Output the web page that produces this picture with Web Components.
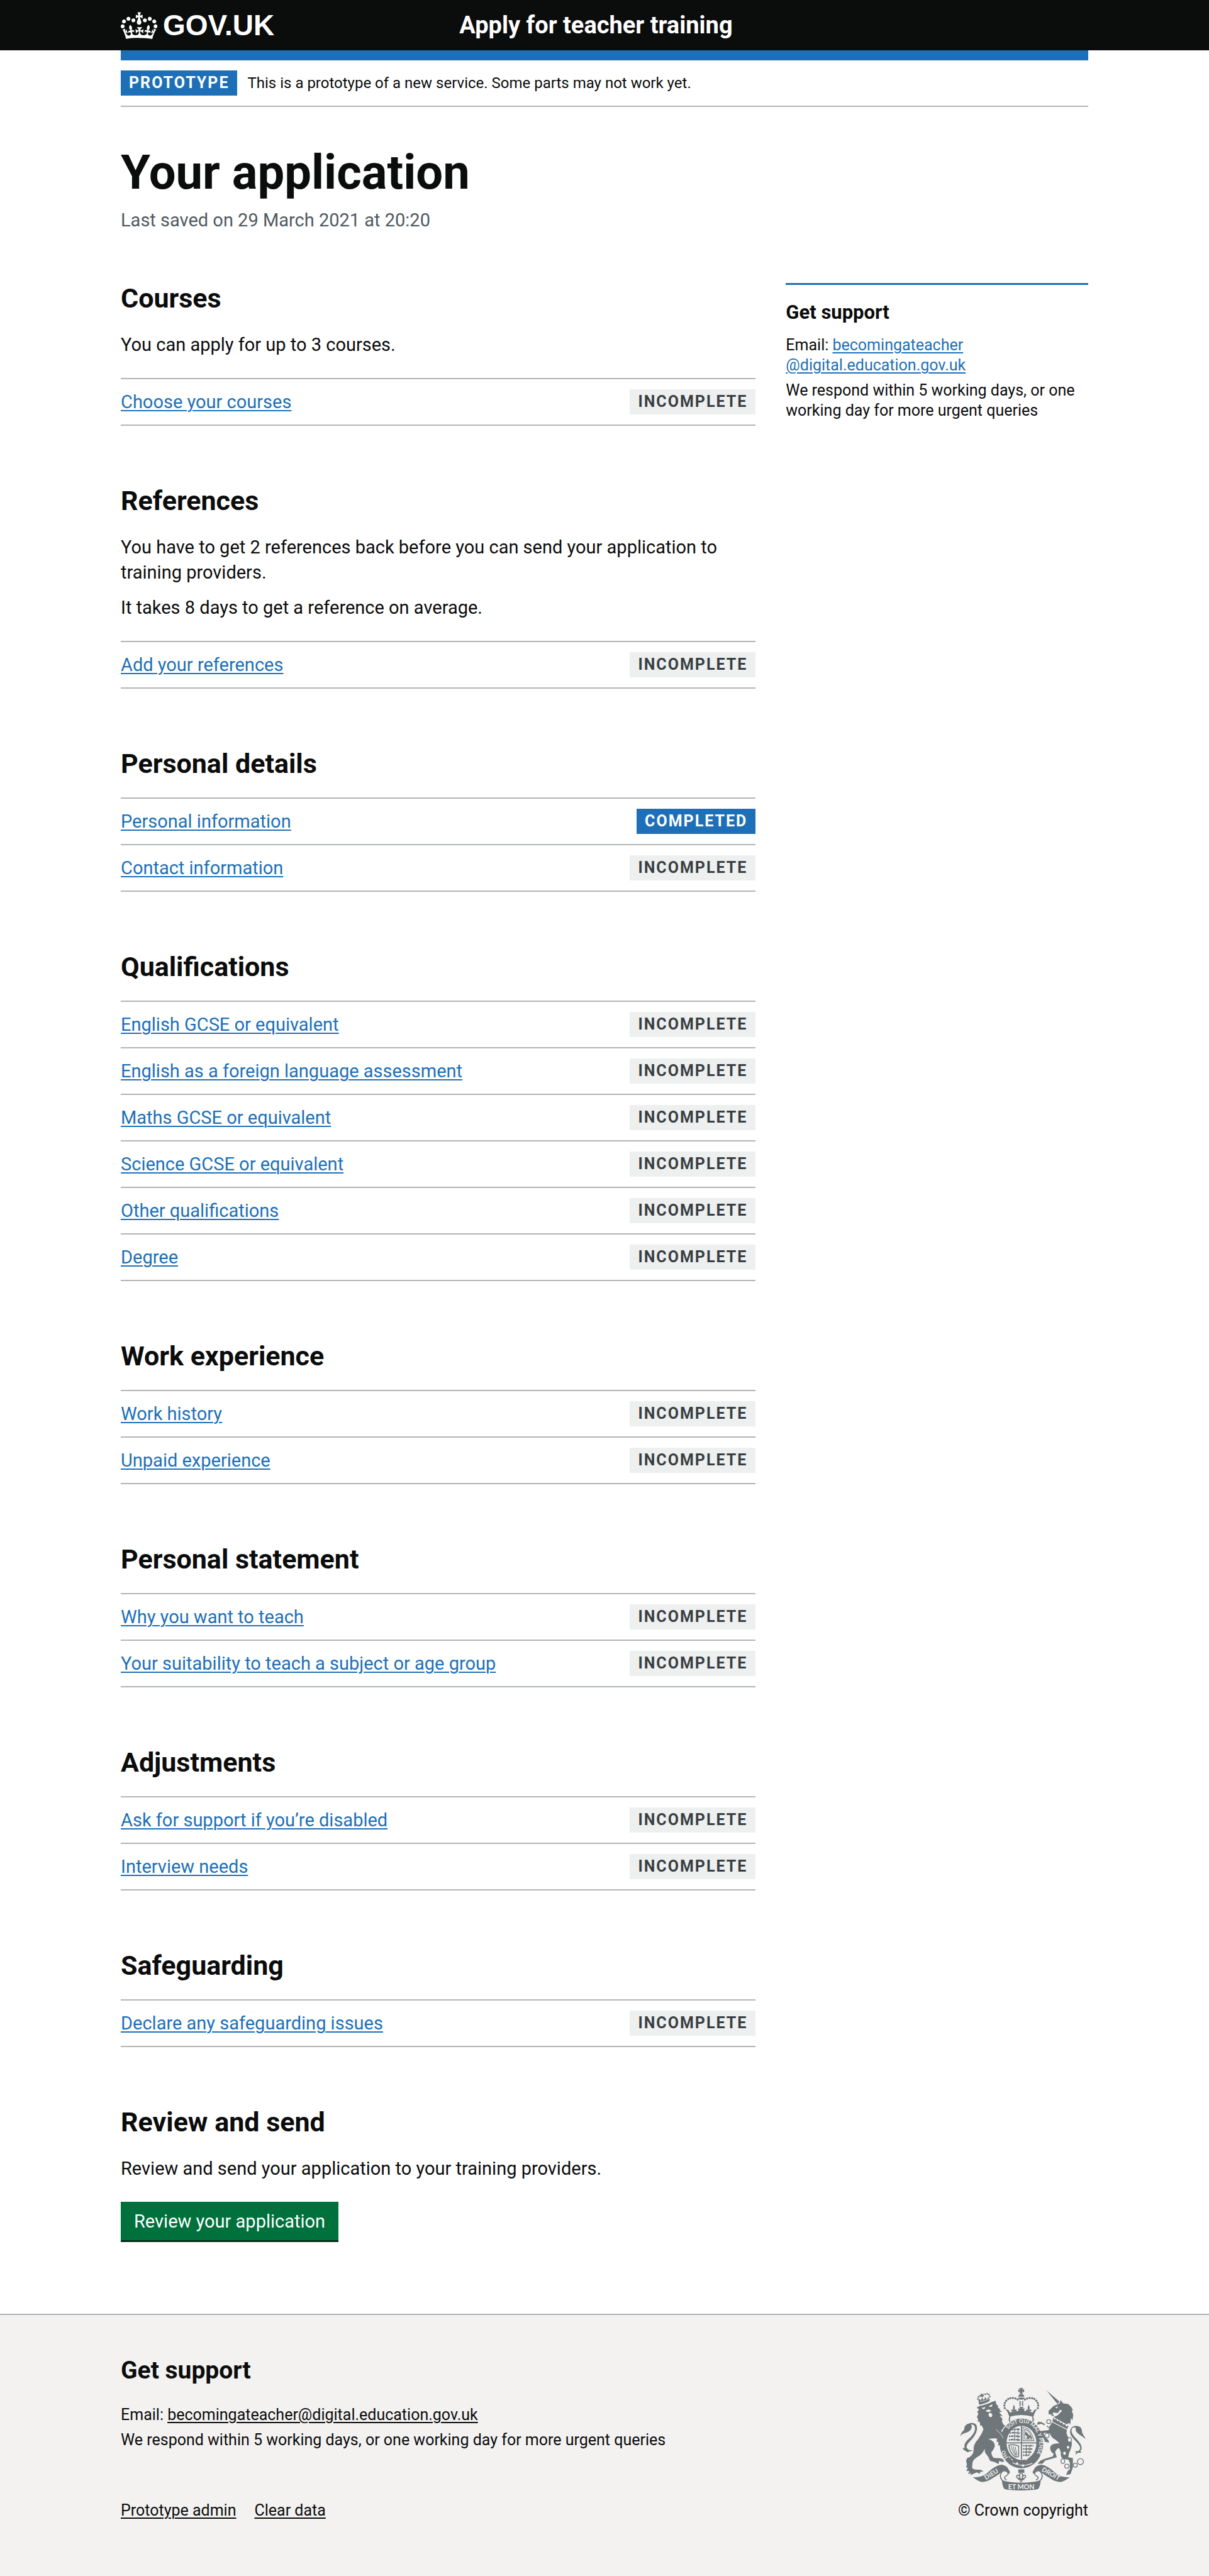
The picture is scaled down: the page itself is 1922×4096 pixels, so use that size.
<!DOCTYPE html>
<html lang="en">
<head>
<meta charset="utf-8">
<meta name="viewport" content="width=device-width, initial-scale=1">
<title>Your application – Apply for teacher training – GOV.UK</title>
<style>
  :root {
    --ink: #0b0c0c;
    --secondary: #505a5f;
    --blue: #1d70b8;
    --rule: #b1b4b6;
    --page: 1538px;
    --gutter: 48px;
  }
  body {
    margin: 0;
    background: #fff;
    color: var(--ink);
    font: 400 29px/40px Roboto, "Liberation Sans", sans-serif;
    -webkit-font-smoothing: antialiased;
  }
</style>
</head>
<body>

<gov-header service="Apply for teacher training"></gov-header>
<phase-banner phase="Prototype">This is a prototype of a new service. Some parts may not work yet.</phase-banner>

<application-page heading="Your application" caption="Last saved on 29 March 2021 at 20:20">
  <task-section heading="Courses">
    <text-block>You can apply for up to 3 courses.</text-block>
    <task-item slot="tasks">Choose your courses</task-item>
  </task-section>
  <task-section heading="References">
    <text-block>You have to get 2 references back before you can send your application to training providers.</text-block>
    <text-block>It takes 8 days to get a reference on average.</text-block>
    <task-item slot="tasks">Add your references</task-item>
  </task-section>
  <task-section heading="Personal details">
    <task-item slot="tasks" completed>Personal information</task-item>
    <task-item slot="tasks">Contact information</task-item>
  </task-section>
  <task-section heading="Qualifications">
    <task-item slot="tasks">English GCSE or equivalent</task-item>
    <task-item slot="tasks">English as a foreign language assessment</task-item>
    <task-item slot="tasks">Maths GCSE or equivalent</task-item>
    <task-item slot="tasks">Science GCSE or equivalent</task-item>
    <task-item slot="tasks">Other qualifications</task-item>
    <task-item slot="tasks">Degree</task-item>
  </task-section>
  <task-section heading="Work experience">
    <task-item slot="tasks">Work history</task-item>
    <task-item slot="tasks">Unpaid experience</task-item>
  </task-section>
  <task-section heading="Personal statement">
    <task-item slot="tasks">Why you want to teach</task-item>
    <task-item slot="tasks">Your suitability to teach a subject or age group</task-item>
  </task-section>
  <task-section heading="Adjustments">
    <task-item slot="tasks">Ask for support if you’re disabled</task-item>
    <task-item slot="tasks">Interview needs</task-item>
  </task-section>
  <task-section heading="Safeguarding">
    <task-item slot="tasks">Declare any safeguarding issues</task-item>
  </task-section>
  <task-section heading="Review and send">
    <text-block>Review and send your application to your training providers.</text-block>
    <action-button slot="action">Review your application</action-button>
  </task-section>
  <support-panel slot="aside"></support-panel>
</application-page>

<gov-footer></gov-footer>

<script>
  const define = (name, render) => customElements.define(name, class extends HTMLElement {
    connectedCallback() {
      if (this.shadowRoot) return;
      this.attachShadow({ mode: 'open' }).innerHTML = render(this);
    }
  });

  const container = `
    .container { box-sizing: border-box; width: min(var(--page), calc(100% - 2 * var(--gutter))); margin: 0 auto; }`;

  define('crown-mark', () => `
    <style>
      :host { display: block; }
      svg { display: block; width: 58px; height: 43px; fill: currentColor; }
    </style>
    <svg viewBox="0 3.8 35.4 26.2" aria-hidden="true">
      <path d="M6.7 12.2c1 .4 2.1-.1 2.5-1s-.1-2.1-1-2.5c-1-.4-2.1.1-2.5 1-.4 1 0 2.1 1 2.5m-4.3 2.5c1 .4 2.1-.1 2.5-1s-.1-2.1-1-2.5c-1-.4-2.1.1-2.5 1-.5 1 0 2.1 1 2.5m-1.3 4.8c1 .4 2.1-.1 2.5-1 .4-1-.1-2.1-1-2.5-1-.4-2.1.1-2.5 1-.4 1 0 2.1 1 2.5m10.4-5.8c1 .4 2.1-.1 2.5-1s-.1-2.1-1-2.5c-1-.4-2.1.1-2.5 1s0 2.1 1 2.5m17.4-1.5c-1 .4-2.1-.1-2.5-1s.1-2.1 1-2.5c1-.4 2.1.1 2.5 1 .5 1 0 2.1-1 2.5m4.3 2.5c-1 .4-2.1-.1-2.5-1s.1-2.1 1-2.5c1-.4 2.1.1 2.5 1 .5 1 0 2.1-1 2.5m1.3 4.8c-1 .4-2.1-.1-2.5-1-.4-1 .1-2.1 1-2.5 1-.4 2.1.1 2.5 1 .4 1 0 2.1-1 2.5m-10.4-5.8c-1 .4-2.1-.1-2.5-1s.1-2.1 1-2.5c1-.4 2.1.1 2.5 1s0 2.1-1 2.5m-5.3-4.9 2.4 1.3V6.5l-2.4.8c-.1-.1-.1-.2-.2-.2s1-3 1-3h-3.4l1 3c-.1.1-.2.1-.2.2-.1.1-2.4-.7-2.4-.7v3.5L17 8.8c-.1.1 0 .2.1.3l-1.4 4.2c-.1.2-.1.4-.1.7 0 1.1.8 2.1 1.9 2.2h.6C19.2 16 20 15.1 20 14c0-.2 0-.4-.1-.7l-1.4-4.2c.2-.1.3-.2.3-.3m-1 20.3c4.6 0 8.9.3 12.8.9 1.1-4.6 2.4-7.2 3.8-9.1l-2.6-.9c.3 1.3.3 1.9 0 2.8-.4-.4-.8-1.2-1.1-2.4l-1.2 4.2c.8-.5 1.4-.9 2-.9-1.2 2.6-2.7 3.2-3.6 3-1.2-.2-1.7-1.3-1.5-2.2.3-1.3 1.6-1.6 2.2-.1 1.2-2.4-.8-3.1-2.1-2.4 1.9-1.9 2.2-3.6.6-5.7-2.2 1.7-2.2 3.3-1.2 5.6-1.3-1.5-3.3-.7-2.5 1.7.9-1.4 2.1-.5 2 .8-.2 1.2-1.7 2.1-3.7 2-2.8-.2-3-2.2-3-3.7.7-.1 1.9.5 3 2l.4-4.4c-1.1 1.2-2.2 1.4-3.3 1.4.4-1.2 2.1-3.1 2.1-3.1h-5.4s1.7 1.9 2.1 3.1c-1.1 0-2.2-.3-3.3-1.4l.4 4.4c1.1-1.5 2.3-2.1 3-2-.1 1.6-.2 3.5-3 3.7-1.9.2-3.5-.8-3.7-2-.2-1.3 1-2.2 1.9-.8.7-2.4-1.3-3.1-2.6-1.7 1-2.3 1-4-1.2-5.6-1.6 2.1-1.3 3.8.6 5.7-1.3-.7-3.2 0-2.1 2.4.6-1.5 1.9-1.1 2.2.1.2.9-.4 1.9-1.5 2.2-1 .2-2.4-.5-3.6-3 .6 0 1.2.3 2 .9l-1.2-4.2c-.3 1.1-.7 1.9-1.1 2.4-.3-.8-.2-1.4 0-2.8l-2.6.9C2.7 22.6 4 25.2 5.1 29.8c3.8-.5 8.2-.8 12.7-.8"/>
    </svg>`);

  define('gov-header', el => `
    <style>
      ${container}
      :host { display: block; }
      header { background: var(--ink); color: #fff; }
      .bar { display: grid; grid-template-columns: 35% 1fr; align-items: center; height: 80px; }
      a { color: inherit; text-decoration: none; font-weight: 700; }
      .logo { display: flex; align-items: center; gap: 9px; width: max-content; font: 700 46px/46px "Liberation Sans", sans-serif; }
      .service { font-size: 38px; line-height: 48px; width: max-content; }
      .stripe { height: 16px; background: var(--blue); }
    </style>
    <header>
      <div class="container bar">
        <a class="logo" href="#"><crown-mark></crown-mark><span>GOV.UK</span></a>
        <a class="service" href="#">${el.getAttribute('service')}</a>
      </div>
    </header>
    <div class="container stripe"></div>`);

  define('status-tag', () => `
    <style>
      :host {
        display: block; padding: 0 13px; background: #eeefef; color: #383f43;
        font-weight: 700; font-size: 25px; line-height: 40px; letter-spacing: 2px;
        text-transform: uppercase; white-space: nowrap;
      }
      :host([solid]) { background: var(--blue); color: #fff; }
    </style><slot></slot>`);

  define('phase-banner', el => `
    <style>
      ${container}
      :host { display: block; }
      .row { display: flex; align-items: center; gap: 16px; padding: 16px 0; border-bottom: 2px solid var(--rule); font-size: 24px; }
    </style>
    <div class="container row"><status-tag solid>${el.getAttribute('phase')}</status-tag><span><slot></slot></span></div>`);

  define('application-page', el => `
    <style>
      ${container}
      :host { display: block; }
      h1 { margin: 64px 0 16px; font-size: 76px; line-height: 80px; font-weight: 700; }
      .caption { margin: 0; color: var(--secondary); }
      .columns { display: flex; align-items: flex-start; gap: var(--gutter); padding: 80px 0 114px; }
      .main { flex: none; width: calc((100% + var(--gutter)) * 2 / 3 - var(--gutter)); display: flex; flex-direction: column; gap: 95px; }
      .aside { flex: 1; }
    </style>
    <main class="container">
      <h1>${el.getAttribute('heading')}</h1>
      <p class="caption">${el.getAttribute('caption')}</p>
      <div class="columns">
        <div class="main"><slot></slot></div>
        <div class="aside"><slot name="aside"></slot></div>
      </div>
    </main>`);

  define('text-block', () => `
    <style>
      :host { display: block; margin-bottom: 16px; }
      p { margin: 0; }
    </style><p><slot></slot></p>`);

  define('task-section', el => `
    <style>
      :host { display: block; }
      h2 { margin: 0 0 30px; font-size: 43px; line-height: 48px; font-weight: 700; }
      ::slotted(text-block:last-of-type) { margin-bottom: 33px; }
      .tasks { border-top: 2px solid var(--rule); }
    </style>
    <section>
      <h2>${el.getAttribute('heading')}</h2>
      <slot></slot>
      ${el.querySelector('task-item') ? '<div class="tasks" role="list"><slot name="tasks"></slot></div>' : ''}
      <slot name="action"></slot>
    </section>`);

  define('task-item', el => `
    <style>
      :host { display: block; }
      div { display: flex; justify-content: space-between; align-items: center; gap: 16px; padding: 16px 0; border-bottom: 2px solid var(--rule); }
      a { color: var(--blue); text-decoration-thickness: 2px; text-underline-offset: 3px; }
    </style>
    <div role="listitem">
      <a href="#"><slot></slot></a>
      ${el.hasAttribute('completed') ? '<status-tag solid>Completed</status-tag>' : '<status-tag>Incomplete</status-tag>'}
    </div>`);

  define('action-button', () => `
    <style>
      :host { display: block; }
      button { display: block; margin: 0; border: 0; border-bottom: 3px solid #002d18; border-radius: 0; padding: 11px 21px 10px; background: #00703c; color: #fff; font: inherit; cursor: pointer; }
    </style><button type="button"><slot></slot></button>`);

  define('support-panel', () => `
    <style>
      :host { display: block; }
      aside { border-top: 3px solid var(--blue); padding-top: 24px; font-size: 25px; line-height: 32px; }
      h2 { margin: 0 0 16px; font-size: 31px; line-height: 40px; font-weight: 700; }
      p { margin: 0 0 8px; }
      a { color: var(--blue); text-decoration-thickness: 2px; text-underline-offset: 3px; }
    </style>
    <aside>
      <h2>Get support</h2>
      <p>Email: <a href="#">becomingateacher<wbr>@digital.education.gov.uk</a></p>
      <p>We respond within 5 working days, or one working day for more urgent queries</p>
    </aside>`);

  const dots = (points, r) => points.map(([x, y]) => `<circle cx="${x}" cy="${y}" r="${r}"/>`).join('');
  // Beads along each arch of the large crown, mirrored about its centre
  const arch = [[399,246],[397,230],[400,215],[408,202],[420,192],[433,187],[448,186],[463,189],[476,195]]
    .flatMap(([x, y]) => [[x, y], [996 - x, y]]);
  // One fleur-de-lis of the crown rim
  const fleur = x => `<path d="M${x} 226q10 18 3 34 8-10 14-2l-6 10h-22l-6-10q6-8 14 2-7-16 3-34z"/>`;

  define('royal-crest', () => `
    <style>
      :host { display: block; }
      svg { display: block; width: 200px; height: 163px; }
      .f { fill: #6f777b; }
      .s { fill: none; stroke: #6f777b; }
      .bg { fill: #f3f2f1; }
      .bs { fill: none; stroke: #f3f2f1; }
      .none { fill: none; }
      text { fill: #f3f2f1; font: 700 38px Lato, sans-serif; text-anchor: middle; }
    </style>
    <svg viewBox="132 126 750 612" role="img" aria-label="Royal coat of arms">
      <!-- large crown -->
      <g class="f">
        <path d="M486 126h23l-6 12 12-5v18l-12-4 6 12h-23l6-12-12 4v-18l12 5z"/>
        <path d="M480 179c2-24 34-24 36 0z"/><path d="M478 183h40c-3 18-37 18-40 0z"/>
        <path d="M487 204h7v30h-7zM502 204h7v30h-7z"/>
        ${dots(arch, 6.5)}
        ${fleur(454)}${fleur(542)}
        <path d="M485 240h27l-8 12 12-6v24h-36v-24l12 6z"/>
        <path d="M402 250L422 258L430 272Q498 254 566 272L574 258L594 250Q576 272 570 299Q498 276 426 299Q420 272 402 250z"/>
      </g>
      <path class="s" stroke-width="7" d="M432 299q-10 13-2 28M564 299q10 13 2 28"/>

      <!-- garter and shield -->
      <ellipse class="f" cx="499" cy="457" rx="130" ry="149"/>
      <ellipse class="bg" cx="499" cy="454" rx="89" ry="102"/>
      <path class="s" stroke-width="7" d="M499 352v200M410 454h178"/>
      <path class="s" stroke-width="9" stroke-dasharray="9 3 15 2" d="M440 376q24-6 48-2M428 396q22-6 62 0M424 416q22-6 66 0M424 437q22-6 66 0M508 471h62M508 490h58M508 509h50M508 528h38"/>
      <path class="s" stroke-width="4" d="M458 370v74M478 366v80M528 466v66M548 466v58M508 361q46 4 66 80h-66zM518 373q30 6 44 58h-44z"/>
      <path class="f" d="M522 386l12 8 8 12 18 10-2 14-10-8-8 10-10-6 2-12-12-8z"/>
      <path class="s" stroke-width="6" d="M424 468q28-8 58 4v62q-14 10-32-6-22-24-26-60z"/>
      <path class="s" stroke-width="4" d="M438 474q10 40 26 54M450 474q6 34 20 56M462 476q2 26 12 48"/>
      <path class="bs" stroke-width="5" d="M424 536l22 22M446 572q56 30 118 4M548 534l-26 24"/>
      <path class="s" stroke-width="7" d="M468 554q-20-18-36-6-8 10 2 16-12 6-6 14 12 10 28 4"/>
      <circle class="bg" cx="473" cy="577" r="7"/><circle class="bg" cx="508" cy="589" r="7"/>

      <!-- lion -->
      <path class="f" d="M132 414Q140 390 158 374Q154 340 204 334Q236 334 234 372Q228 410 190 446Q168 466 172 484L184 496L212 500L188 505L178 510L152 494L148 483L160 486Q152 462 176 438Q222 398 222 368Q220 342 198 344Q208 360 196 376Q182 392 158 396Q144 400 132 414z"/>
      <path class="f" d="M232 242L252 232L345 202L348 222L362 236L356 240L374 256L366 258L384 266L366 272L387 294L370 292L386 312L382 324L392 346L402 350L378 382L398 420L410 458L402 480L390 474L380 482L370 468L360 470L362 450L350 446L354 430L340 426L302 430Q340 444 340 470Q338 490 320 508Q318 530 334 544L370 546Q392 548 395 566L384 568L366 562L362 580L338 568L312 562L300 536L282 512Q276 490 282 464Q284 500 252 528Q208 552 207 572L204 602Q214 616 240 614Q268 612 270 628L256 624L250 638L232 630L208 640L194 648L198 634L180 640L188 622L170 622L178 604L168 596L174 584L168 560L176 544Q208 536 214 500Q210 474 226 450Q262 406 272 372L262 350L254 352L248 326L238 328L240 306L232 304L242 278L234 270L246 256z"/>
      <path class="f" d="M242 200l8-10 6 12 8-18 10 14 10-18 8 14 10-14 8 14-2 10q-28 18-62 22z"/>
      <path class="f" d="M258 156l8 8 9-4-3 10 5 6-10 1 2 9-7-7-8 2 3-9-6-6 8-1z"/>
      <g class="f">${dots([[239,192],[242,180],[251,173],[282,164],[294,161],[305,166],[310,178]], 5)}</g>
      <path class="bs" stroke-width="5" d="M240 230q46-2 90-28"/>
      <path class="bs" stroke-width="3" d="M250 208q30-4 56-18M346 374q30 22 44 52"/>
      <path class="bg" d="M260 246l24-6q-2 14-14 12zM303 236l22-12q2 16-12 16zM284 264l16-10 20 8q-8 6-14 6l-8 2z"/>
      <path class="bg" d="M304 276q14-6 20 8 4 12-8 17-14-2-13-15z"/>

      <!-- unicorn -->
      <path class="f" d="M882 430C876 412 860 400 860 384C860 362 844 352 824 352C800 352 786 372 790 396C798 432 852 458 850 488L840 502L814 504L826 508L820 526L834 514L858 512L850 504L858 490C864 446 800 420 798 382C798 364 810 358 824 364C814 392 850 404 882 430z"/>
      <path class="f" d="M648 140L726 208L714 222z"/>
      <path class="f" d="M660 264L692 232L716 224L728 216L732 198L748 218L778 222L796 240L806 258L799 262L808 286L804 318L794 306L790 346L782 334L770 344L690 300L714 290L742 262L730 256L716 276L690 272L684 280L694 292L682 294L676 284L662 284z"/>
      <path class="f" d="M684 328L770 372L768 398L780 425L800 452Q800 480 784 512L778 540L806 545L806 600L792 640L765 646L775 622L788 610L788 575L780 555L745 548Q730 535 734 510L724 485Q706 490 700 510L710 540L640 560L625 578L595 578L612 560L640 548L685 535L692 520Q668 505 670 480Q676 462 700 458L726 456L702 435Q680 425 668 398L640 393L630 398L640 420L660 438L664 452L640 448L632 428L612 400L606 384L662 378L664 365L640 350L618 340L592 346L598 328L618 330L645 345L664 360z"/>
      <path class="bg" d="M700 240l18-3-8 11z"/>
      <path class="f" d="M688 302l10 14 8-6 8 16 10-6 6 14 12-2 6 14 12-4 4 14 16-6-8 22-88-44z"/>
      <path class="bs" stroke-width="4" d="M682 329l90 46"/>
      <g class="s" stroke-width="5">
        <ellipse cx="662" cy="327" rx="12" ry="12"/><ellipse cx="651" cy="410" rx="13" ry="14"/>
        <ellipse cx="746" cy="563" rx="11" ry="14"/><ellipse cx="770" cy="593" rx="13" ry="12"/>
        <ellipse cx="820" cy="587" rx="12" ry="12"/><circle cx="851" cy="566" r="18"/>
      </g>
      <g class="bg"><ellipse cx="644" cy="350" rx="7" ry="9"/><ellipse cx="786" cy="436" rx="11" ry="13"/><ellipse cx="777" cy="480" rx="7" ry="9"/><ellipse cx="756" cy="516" rx="8" ry="10"/></g>
      <ellipse class="s" stroke-width="5" cx="786" cy="436" rx="12" ry="14"/>

      <!-- fleur-de-lis below the shield -->
      <path class="f" d="M480 612h36v24q-18-14-36 0z"/>
      <path class="s" stroke-width="6" d="M497 626q-16 22-4 44h8q12-22-4-44M490 668q-22-2-20-18 12-10 18 6M504 668q22-2 20-18-12-10-18 6M478 672h38"/>
      <circle class="s" stroke-width="5" cx="497" cy="681" r="6"/>

      <!-- scroll -->
      <path class="f" d="M208 658Q252 664 290 638Q340 588 380 584Q414 588 424 616L432 630L418 640Q408 618 386 626Q354 648 322 668Q290 690 260 687Q236 680 208 658z"/>
      <path class="f" d="M788 658Q744 664 706 638Q656 588 616 584Q582 588 572 616L564 630L578 640Q588 618 610 626Q642 648 674 668Q706 690 736 687Q760 680 788 658z"/>
      <path class="f" d="M382 674Q410 690 498 692Q586 690 614 674Q612 714 598 730Q570 738 498 738Q426 738 398 730Q384 714 382 674z"/>
      <path class="s" stroke-width="6" d="M384 626Q362 650 384 678M424 632Q418 646 398 658Q396 668 410 676M612 626Q634 650 612 678M572 632Q578 646 598 658Q600 668 586 676"/>

      <!-- mottoes -->
      <path id="motto-arc" class="none" d="M398 420A106 122 0 1 1 557 558"/>
      <path id="motto-start" class="none" d="M440 558A106 122 0 0 1 394 470"/>
      <text style="font-size:31px"><textPath href="#motto-arc" startOffset="50%">SOIT QUI MAL Y PENSE</textPath></text>
      <text style="font-size:31px"><textPath href="#motto-start" startOffset="50%">HO</textPath></text>
      <text transform="translate(326 652) rotate(-32)">DIEU</text>
      <text transform="translate(668 650) rotate(30)">DROIT</text>
      <text x="498" y="729" style="font-size:40px">ET MON</text>
    </svg>`);

  define('gov-footer', () => `
    <style>
      ${container}
      :host { display: block; }
      footer { border-top: 2px solid var(--rule); background: #f3f2f1; font-size: 25px; }
      .row { display: flex; justify-content: space-between; align-items: flex-end; gap: var(--gutter); padding: 64px 0 84px; }
      h2 { margin: 0 0 27px; font-size: 39px; line-height: 48px; font-weight: 700; }
      p { margin: 0; }
      a { color: inherit; text-decoration-thickness: 2px; text-underline-offset: 3px; }
      nav { display: flex; gap: 29px; margin-top: 72px; }
      .rights { display: flex; flex-direction: column; align-items: center; gap: 12px; }
    </style>
    <footer>
      <div class="container row">
        <div>
          <h2>Get support</h2>
          <p>Email: <a href="#">becomingateacher@digital.education.gov.uk</a></p>
          <p>We respond within 5 working days, or one working day for more urgent queries</p>
          <nav><a href="#">Prototype admin</a><a href="#">Clear data</a></nav>
        </div>
        <div class="rights"><royal-crest></royal-crest><span>© Crown copyright</span></div>
      </div>
    </footer>`);
</script>
</body>
</html>
